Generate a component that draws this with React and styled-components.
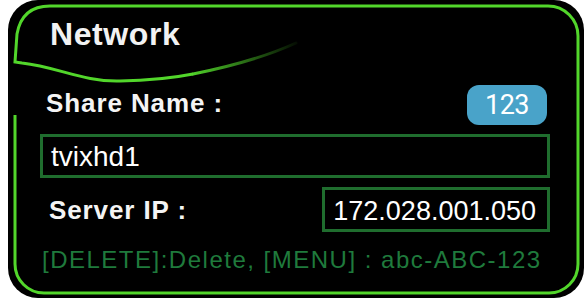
import React from 'react'
import styled, { createGlobalStyle } from 'styled-components'

const GlobalStyle = createGlobalStyle`
  body {
    margin: 0;
    background: #fff;
    font-family: "Liberation Sans", Arial, sans-serif;
  }
`

const FRAME_GREEN = '#52d62b'

const Frame = () => (
  <FrameSvg width="576" height="298" viewBox="0 0 576 298">
    <defs>
      <linearGradient id="waveFade" gradientUnits="userSpaceOnUse" x1="180" y1="0" x2="290" y2="0">
        <stop offset="0" stopColor={FRAME_GREEN} stopOpacity="1" />
        <stop offset="1" stopColor={FRAME_GREEN} stopOpacity="0.05" />
      </linearGradient>
    </defs>
    <path
      d="M 7 115 V 264 A 29 29 0 0 0 36 293 H 541 A 29 29 0 0 0 570 264 V 36 A 30 30 0 0 0 540 6 H 42 Q 14 6 9 34 L 7 62 L 14 63 C 50 67 75 82 112 81 C 140 80.5 165 78 185 74"
      fill="none"
      stroke={FRAME_GREEN}
      strokeWidth="3"
    />
    <path
      d="M 185 74 C 220 67 255 58 288 43"
      fill="none"
      stroke="url(#waveFade)"
      strokeWidth="3"
      strokeLinecap="round"
    />
  </FrameSvg>
)

const App = () => (
  <>
    <GlobalStyle />
    <Panel>
      <Frame />
      <Title>Network</Title>
      <ShareRow>
        <Label $indent={6}>Share Name :</Label>
        <Badge>123</Badge>
      </ShareRow>
      <NameInput>tvixhd1</NameInput>
      <ServerRow>
        <Label $indent={9}>Server IP :</Label>
        <IpInput>172.028.001.050</IpInput>
      </ServerRow>
      <Help>[DELETE]:Delete, [MENU] : abc-ABC-123</Help>
    </Panel>
  </>
)

const Panel = styled.section`
  position: relative;
  display: flex;
  flex-direction: column;
  box-sizing: border-box;
  margin-left: 8px;
  width: 576px;
  height: 298px;
  padding: 18px 34px 0 32px;
  background: #000;
  border-radius: 30px;
  overflow: hidden;
`

const FrameSvg = styled.svg`
  position: absolute;
  left: 0;
  top: 0;
  pointer-events: none;
`

const Title = styled.h1`
  margin: 0 0 35px 10px;
  font-size: 32px;
  line-height: 32px;
  font-weight: bold;
  letter-spacing: 0.6px;
  color: #f2f2f2;
`

const ShareRow = styled.div`
  display: flex;
  justify-content: space-between;
  align-items: flex-start;
  height: 40px;
  padding-right: 3px;
`

const Label = styled.span`
  margin-left: ${({ $indent }) => $indent}px;
  font-size: 26px;
  line-height: 26px;
  font-weight: bold;
  letter-spacing: 0.9px;
  color: #f4f4f4;
  white-space: nowrap;

  ${ShareRow} & {
    margin-top: 5px;
  }
`

const Badge = styled.div`
  display: flex;
  align-items: center;
  justify-content: center;
  width: 80px;
  height: 40px;
  border-radius: 12px;
  background: #49a3c9;
  color: #fff;
  font-family: Roboto, "Liberation Sans", sans-serif;
  font-size: 27px;
  letter-spacing: -0.5px;
`

const Field = styled.div`
  display: flex;
  align-items: center;
  box-sizing: border-box;
  border: 3px solid #1f6d2e;
  color: #fff;
  line-height: 28px;
  white-space: nowrap;
`

const NameInput = styled(Field)`
  margin-top: 9px;
  height: 44px;
  padding: 2px 8px 0;
  font-size: 28px;
`

const ServerRow = styled.div`
  display: flex;
  justify-content: space-between;
  align-items: center;
  margin-top: 9px;
  height: 45px;
`

const IpInput = styled(Field)`
  justify-content: flex-end;
  width: 228px;
  height: 45px;
  padding: 2px 11px 0 0;
  font-size: 27px;
`

const Help = styled.div`
  margin: 16px 0 0 2px;
  font-size: 24px;
  line-height: 24px;
  letter-spacing: 1.5px;
  color: #1f7a3c;
  white-space: nowrap;
`

export default App
